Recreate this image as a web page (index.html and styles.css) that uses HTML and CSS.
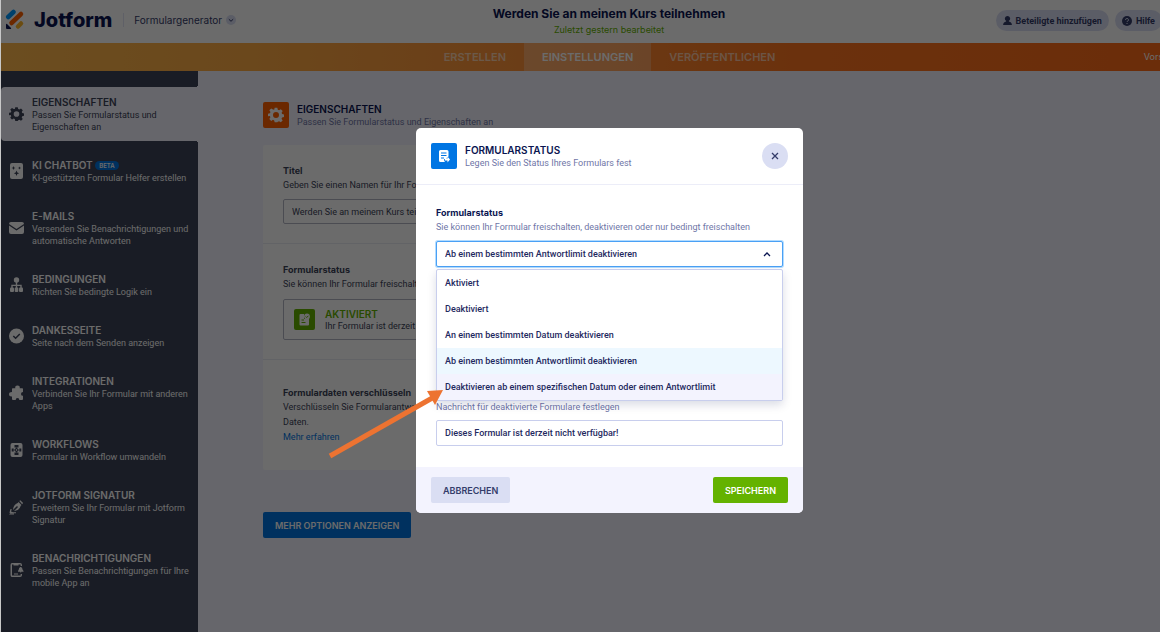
FILE: index.html
```
<!DOCTYPE html>
<html lang="de">
<head>
    <meta charset="UTF-8">
    <meta name="viewport" content="width=device-width, initial-scale=1.0">
    <title>Formulargenerator - Jotform</title>
    <link rel="stylesheet" href="styles.css">
</head>
<body>
    <svg class="sprite" aria-hidden="true">
        <symbol id="gear" viewBox="0 0 24 24">
            <path fill-rule="evenodd" d="M10 1h4l.7 3 1.900.8 2.600-1.600 2.800 2.800-1.600 2.600.8 1.900 2.800.6v3.800l-2.900.7-.8 1.900 1.700 2.600-2.800 2.800-2.600-1.600-1.900.8L14 23h-4l-.7-2.900-1.900-.8-2.600 1.600L2 18.100l1.600-2.600-.8-1.900L0 14V10l2.900-.6.8-1.900L2 4.900l2.800-2.700 2.600 1.600L9.300 4zM12 7.500a4.500 4.500 0 1 0 0 9 4.500 4.500 0 0 0 0-9z"/>
        </symbol>
    </svg>

    <div class="app">
        <header class="topbar">
            <div class="brand">
                <a class="logo" href="#">
                    <svg width="20" height="21" viewBox="0 0 20 21" aria-hidden="true">
                        <g fill="none" stroke-width="4.500" stroke-linecap="round">
                            <path stroke="#0099ff" d="M3.200 8L8.500 3"/>
                            <path stroke="#ff6100" d="M6.500 14L16 5"/>
                            <path stroke="#ffb629" d="M13 17.500l3-3"/>
                        </g>
                        <path fill="#0a1551" d="M1 15.500q0-1 1-.5l4 4q.5 1-.5 1H2q-1 0-1-1z"/>
                    </svg>
                    <span>Jotform</span>
                </a>
                <button class="product" type="button">
                    Formulargenerator
                    <svg width="10" height="10" viewBox="0 0 10 10" aria-hidden="true"><circle cx="5" cy="5" r="5" fill="#dadef3"/><path d="M2.800 4.200L5 6.300l2.200-2.100" fill="none" stroke="#343c6a"/></svg>
                </button>
            </div>
            <div class="form-name">
                <h1>Werden Sie an meinem Kurs teilnehmen</h1>
                <p>Zuletzt gestern bearbeitet</p>
            </div>
            <div class="actions">
                <button class="pill" type="button">
                    <svg width="9" height="10" viewBox="0 0 9 10" aria-hidden="true"><path fill="currentColor" d="M4.500 0a2.600 2.600 0 0 1 1.400 4.800v.7q3 .5 3 3.500H.100q0-3 3-3.500v-.7A2.600 2.600 0 0 1 4.500 0z"/></svg>
                    Beteiligte hinzufügen
                </button>
                <button class="pill" type="button">
                    <svg width="10" height="10" viewBox="0 0 10 10" aria-hidden="true"><circle cx="5" cy="5" r="5" fill="currentColor"/><path d="M3.500 3.900a1.500 1.400 0 1 1 2 1.300q-.5.200-.5.800M5 7v1" fill="none" stroke="#dadef3"/></svg>
                    Hilfe
                </button>
            </div>
        </header>

        <nav class="tabs">
            <div class="tab-list">
                <a href="#">ERSTELLEN</a>
                <a href="#" class="active">EINSTELLUNGEN</a>
                <a href="#">VERÖFFENTLICHEN</a>
            </div>
            <a class="preview" href="#">Vorschau</a>
        </nav>

        <div class="workspace">
            <aside class="sidebar">
                <ul>
                    <li class="active"><a href="#">
                        <svg viewBox="0 0 24 24"><use href="#gear"/></svg>
                        <span><strong>EIGENSCHAFTEN</strong>Passen Sie Formularstatus und<br>Eigenschaften an</span>
                    </a></li>
                    <li><a href="#">
                        <svg viewBox="0 0 15 16"><rect x="1" width="13" height="16" rx="2"/><path class="cut" d="M4.500 3l.6 1.400 1.400.6-1.400.6L4.500 7l-.6-1.400L2.500 5l1.400-.6zM10.500 3.500l.5 1 1 .5-1 .5-.5 1-.5-1-1-.5 1-.5zM7.500 7.500l.8 1.900 1.900.8-1.900.8-.8 1.900-.8-1.900-1.900-.8 1.900-.8z"/></svg>
                        <span><strong>KI CHATBOT <em>BETA</em></strong>KI-gestützten Formular Helfer erstellen</span>
                    </a></li>
                    <li><a href="#">
                        <svg viewBox="0 0 15 16"><path d="M0 4q0-2 2-2h11q2 0 2 2L7.500 9z"/><path d="M0 5.500l7.500 5 7.500-5V12q0 2-2 2H2q-2 0-2-2z"/></svg>
                        <span><strong>E-MAILS</strong>Versenden Sie Benachrichtigungen und<br>automatische Antworten</span>
                    </a></li>
                    <li><a href="#">
                        <svg viewBox="0 0 15 16"><circle cx="7.500" cy="3" r="2.700"/><path d="M6.800 5h1.400v2.700h4.500V11h-1.400V9H3.700v2H2.300V7.700h4.500z"/><rect x="1" y="10.500" width="4" height="4.500" rx="1"/><rect x="5.700" y="10.500" width="3.600" height="4.500" rx="1"/><path d="M6.800 8h1.400v3H6.800z"/><rect x="10" y="10.500" width="4" height="4.500" rx="1"/></svg>
                        <span><strong>BEDINGUNGEN</strong>Richten Sie bedingte Logik ein</span>
                    </a></li>
                    <li><a href="#">
                        <svg viewBox="0 0 15 16"><circle cx="7.500" cy="8" r="7.500"/><path class="line" d="M4.300 8l2.300 2.300 4.200-4.300"/></svg>
                        <span><strong>DANKESSEITE</strong>Seite nach dem Senden anzeigen</span>
                    </a></li>
                    <li><a href="#">
                        <svg viewBox="0 0 15 16"><path d="M3 4q0-.7.700-.7h2.600Q5.700.500 8.500.500t2.200 2.800h2.600q.7 0 .7.700v3q-2 0-2 1.900T14 10.800V14q0 1-1 1h-2.700q.2-2-1.800-2t-1.800 2H4q-1 0-1-1v-2.600q-3 .400-3-2t3-2.400z"/></svg>
                        <span><strong>INTEGRATIONEN</strong>Verbinden Sie Ihr Formular mit anderen<br>Apps</span>
                    </a></li>
                    <li><a href="#">
                        <svg viewBox="0 0 15 16"><rect x="1.500" y="1" width="12" height="14" rx="2"/><path class="cut" d="M5.500 3h4v2.500h-4zM7.500 5.500l2.500 2.500-2.500 2.500L5 8zM2.700 6.500h2v3h-2zM10.300 6.500h2v3h-2zM5.500 10.500h4V13h-4z"/><path d="M7.500 7l1 1-1 1-1-1z"/></svg>
                        <span><strong>WORKFLOWS</strong>Formular in Workflow umwandeln</span>
                    </a></li>
                    <li><a href="#">
                        <svg viewBox="0 0 15 16"><path d="M9.500 3l3 3-.8.800Q11 11 5.500 12L4 10.700Q4.500 5.500 8.700 4zM10.300 2l1-.8 2.800 2.800-1 1.300z"/><path class="line" d="M4 12L8.500 7.500"/><path d="M1.500 10l1.300.3L2 12.500l2 .7h3v1H1l-.5-.7zM1 14.500h4v1H0z"/></svg>
                        <span><strong>JOTFORM SIGNATUR</strong>Erweitern Sie Ihr Formular mit Jotform<br>Signatur</span>
                    </a></li>
                    <li><a href="#">
                        <svg viewBox="0 0 15 16"><path fill-rule="evenodd" d="M3 1h8q2 0 2 2v1h-1.400V2.500H9.500v1h-5v-1H3v11h8.600V12H13v1q0 2-2 2H3q-1.500 0-1.500-2V3Q1.500 1 3 1zM5 11.500h4v1H5z"/><path d="M12 5q1.500.5 1.500 2.500L14.500 9v.7h-2.300v.8h-1v-.8H9V9l.8-1.500Q9.800 5.500 11.300 5z"/></svg>
                        <span><strong>BENACHRICHTIGUNGEN</strong>Passen Sie Benachrichtigungen für Ihre<br>mobile App an</span>
                    </a></li>
                </ul>
            </aside>

            <main class="settings">
                <div class="section-head">
                    <span class="badge orange"><svg width="16" height="16" viewBox="0 0 24 24"><use href="#gear"/></svg></span>
                    <div>
                        <h2>EIGENSCHAFTEN</h2>
                        <p>Passen Sie Formularstatus und Eigenschaften an</p>
                    </div>
                </div>

                <div class="card">
                    <section>
                        <label for="formTitle">Titel</label>
                        <p>Geben Sie einen Namen für Ihr Formular ein</p>
                        <input id="formTitle" type="text" value="Werden Sie an meinem Kurs teilnehmen">
                    </section>
                    <section>
                        <h3>Formularstatus</h3>
                        <p>Sie können Ihr Formular freischalten oder deaktivieren</p>
                        <button class="status" type="button">
                            <svg width="21" height="21" viewBox="0 0 21 21" aria-hidden="true"><rect width="21" height="21" rx="2" fill="#64b200"/><path fill="#fff" d="M6.500 5H10v5h5v5.500q0 1-1 1H6.500q-1 0-1-1V6q0-1 1-1z"/><circle cx="13" cy="7.500" r="2.900" fill="#fff"/><path d="M11.700 7.500l1 1 1.700-1.700M7.500 11H10M7.500 13.500h4" fill="none" stroke="#64b200"/></svg>
                            <span><strong>AKTIVIERT</strong>Ihr Formular ist derzeit sichtbar</span>
                        </button>
                    </section>
                    <section>
                        <h3>Formulardaten verschlüsseln</h3>
                        <p>Verschlüsseln Sie Formularantworten zum Schutz sensibler<br>Daten.</p>
                        <a href="#">Mehr erfahren</a>
                    </section>
                </div>

                <button class="btn blue" type="button">MEHR OPTIONEN ANZEIGEN</button>
            </main>
        </div>

        <div class="overlay">
            <div class="modal" role="dialog" aria-labelledby="modalTitle">
                <div class="modal-head">
                    <span class="badge"><svg width="14" height="14" viewBox="0 0 14 14"><path fill="#fff" d="M3.500 1H10q1.500 0 1.500 1.500v5L9.500 9v1H7.200v2l1 1H3.500Q2 13 2 11.500v-9Q2 1 3.500 1z"/><path d="M4 4h5.500M4 6.500h5.500M4 9h3" fill="none" stroke="#0075e3"/><path fill="#fff" d="M10.500 7.500l2.500 3-2.500 3v-2H8v-2h2.500z"/></svg></span>
                    <div>
                        <h2 id="modalTitle">FORMULARSTATUS</h2>
                        <p>Legen Sie den Status Ihres Formulars fest</p>
                    </div>
                    <button class="close" type="button" aria-label="Schließen">
                        <svg width="8" height="8" viewBox="0 0 8 8"><path d="M1 1l6 6M7 1L1 7" stroke="currentColor" stroke-width="1.300"/></svg>
                    </button>
                </div>
                <div class="modal-body">
                    <label for="status">Formularstatus</label>
                    <p>Sie können Ihr Formular freischalten, deaktivieren oder nur bedingt freischalten</p>
                    <div class="dropdown">
                        <select id="status">
                            <option>Aktiviert</option>
                            <option>Deaktiviert</option>
                            <option>An einem bestimmten Datum deaktivieren</option>
                            <option selected>Ab einem bestimmten Antwortlimit deaktivieren</option>
                            <option>Deaktivieren ab einem spezifischen Datum oder einem Antwortlimit</option>
                        </select>
                        <svg class="caret" width="8" height="6" viewBox="0 0 8 6" aria-hidden="true"><path d="M1 5l3-3 3 3" fill="none" stroke="currentColor" stroke-width="1.300"/></svg>
                        <ul class="options" role="listbox" aria-label="Formularstatus">
                            <li role="option">Aktiviert</li>
                            <li role="option">Deaktiviert</li>
                            <li role="option">An einem bestimmten Datum deaktivieren</li>
                            <li role="option" class="selected" aria-selected="true">Ab einem bestimmten Antwortlimit deaktivieren</li>
                            <li role="option" class="hover">Deaktivieren ab einem spezifischen Datum oder einem Antwortlimit</li>
                        </ul>
                    </div>
                    <label class="message-label" for="message">Warnmeldung</label>
                    <p>Nachricht für deaktivierte Formulare festlegen</p>
                    <input id="message" type="text" value="Dieses Formular ist derzeit nicht verfügbar!">
                </div>
                <div class="modal-foot">
                    <button class="btn grey" type="button">ABBRECHEN</button>
                    <button class="btn green" type="button">SPEICHERN</button>
                </div>
            </div>
        </div>

        <svg class="pointer" width="116" height="70" viewBox="0 0 116 70" aria-hidden="true">
            <path d="M2 67L106 8" stroke="#ed7331" stroke-width="5"/>
            <path d="M115 1L99 2l8 14z" fill="#ed7331"/>
        </svg>
    </div>
</body>
</html>
```
FILE: styles.css
```
* {
    box-sizing: border-box;
}

body {
    margin: 0;
    overflow: hidden;
    background-color: #c8c8c8;
    font-family: Roboto, "Liberation Sans", sans-serif;
    font-size: 9px;
    color: #0a1551;
}

h1, h2, h3, p, ul {
    margin: 0;
    padding: 0;
    list-style: none;
}

h1, h2, h3, label, strong, .logo, .tabs {
    font-family: Inter, "Liberation Sans", sans-serif;
}

a {
    color: inherit;
    text-decoration: none;
}

button, input, select {
    font: inherit;
    color: inherit;
    margin: 0;
}

button {
    border: none;
    padding: 0;
    cursor: pointer;
}

.sprite {
    display: none;
}

/* the builder is a bit wider than the window */
.app {
    position: relative;
    width: 105vw;
    height: 100vh;
    padding-left: 1px;
    display: flex;
    flex-direction: column;
    overflow: hidden;
}

/* top bar */
.topbar {
    display: grid;
    grid-template-columns: 1fr auto 1fr;
    align-items: center;
    height: 43px;
    flex: none;
    padding: 0 56px 2px 4px;
    background-color: #fff;
}

.brand, .logo, .product, .actions, .pill {
    display: flex;
    align-items: center;
}

.brand {
    padding-bottom: 2px;
}

.logo {
    gap: 9px;
    font-size: 20px;
    line-height: 24px;
    font-weight: 800;
}

.product {
    gap: 4px;
    margin-left: 11px;
    padding-left: 10px;
    height: 14px;
    border-left: 1px solid #e3e5f5;
    background: none;
    font-family: Inter, "Liberation Sans", sans-serif;
    font-size: 10px;
    color: #343c6a;
}

.form-name {
    margin-left: 51px;
    text-align: center;
}

.form-name h1 {
    font-size: 12px;
    line-height: 18px;
    font-weight: 700;
}

.form-name p {
    font-family: Inter, "Liberation Sans", sans-serif;
    line-height: 13px;
    color: #64b200;
}

.actions {
    justify-content: flex-end;
    gap: 6px;
}

.pill {
    gap: 4px;
    height: 21px;
    padding: 0 7px;
    border-radius: 11px;
    background-color: #dadef3;
    font-weight: 700;
    color: #343c6a;
}

/* tabs */
.tabs {
    display: grid;
    grid-template-columns: 1fr auto 1fr;
    height: 28px;
    flex: none;
    background: linear-gradient(to right, #ffb84c, #ffac44 20%, #ff953a 40%, #ff7620 65%, #ff6a18);
    color: #fff;
}

.tab-list {
    grid-column: 2;
    display: flex;
    font-size: 11px;
    line-height: 28px;
    font-weight: 600;
}

.tab-list a {
    padding: 0 18px;
    color: rgba(255, 255, 255, 0.6);
}

.tab-list .active {
    background-color: rgba(255, 255, 255, 0.25);
    color: #fff;
}

.preview {
    justify-self: end;
    padding-right: 34px;
    line-height: 28px;
}

/* sidebar */
.workspace {
    flex: 1;
    display: flex;
    min-height: 0;
    background-color: #f3f3fe;
}

.sidebar {
    width: 197px;
    flex: none;
    padding-top: 16px;
    background-color: #3c4358;
    color: #fff;
}

.sidebar ul {
    display: flex;
    flex-direction: column;
    gap: 9px;
}

.sidebar a {
    display: flex;
    align-items: center;
    gap: 8px;
    padding: 8px 0 8px 8px;
    white-space: nowrap;
    line-height: 12px;
}

.sidebar .active {
    position: relative;
    border-radius: 4px 0 0 4px;
    background-color: #f3f3fe;
    color: #3c4358;
}

/* rounded dark corners above and below the active item */
.sidebar .active::before, .sidebar .active::after {
    content: "";
    position: absolute;
    right: 0;
    width: 3px;
    height: 3px;
}

.sidebar .active::before {
    top: -3px;
    background: radial-gradient(circle at 0 0, #3c4358 3px, #f3f3fe 3px);
}

.sidebar .active::after {
    bottom: -3px;
    background: radial-gradient(circle at 0 100%, #3c4358 3px, #f3f3fe 3px);
}

.sidebar svg {
    width: 15px;
    height: 16px;
    flex: none;
    fill: currentColor;
}

.sidebar .cut {
    fill: #3c4358;
}

.sidebar .line {
    fill: none;
    stroke: #3c4358;
    stroke-width: 1.5;
}

.sidebar strong {
    display: block;
    font-size: 10px;
    line-height: 14px;
    font-weight: 600;
}

.sidebar em {
    padding: 1px 4px;
    border-radius: 6px;
    background-color: #0075e3;
    font-size: 6px;
    line-height: 8px;
    font-style: normal;
    vertical-align: 1px;
}

/* settings */
.settings {
    width: 575px;
    padding: 31px 0 0 65px;
}

.badge {
    display: grid;
    place-items: center;
    width: 26px;
    height: 26px;
    border-radius: 2px;
    background-color: #0075e3;
    fill: #fff;
}

.orange {
    background-color: #ff6100;
}

.section-head, .modal-head {
    display: flex;
    align-items: center;
    gap: 8px;
}

.section-head h2, .modal-head h2 {
    font-size: 10px;
    line-height: 14px;
    font-weight: 600;
}

.section-head p, .modal-head p {
    line-height: 12px;
    color: #6f76a7;
}

.card {
    margin: 17px 0 42px;
    border-radius: 2px;
    background-color: #fff;
    color: #3c4358;
}

.card section {
    padding: 19px 20px;
    border-bottom: 1px solid #eaebf2;
}

.card section:last-child {
    padding-top: 26px;
    padding-bottom: 25px;
    border: none;
}

.card label, .card h3, .modal-body label {
    display: block;
    font-size: 9px;
    line-height: 14px;
    font-weight: 700;
}

.card p, .card a {
    line-height: 15px;
}

.card a {
    color: #0075e3;
}

.card input {
    display: block;
    width: 100%;
    height: 25px;
    margin-top: 6px;
    padding: 0 8px;
    border: 1px solid #b4b6c4;
    border-radius: 2px;
    background: none;
}

.status {
    display: flex;
    align-items: center;
    gap: 10px;
    width: 100%;
    height: 41px;
    margin-top: 7px;
    padding: 0 10px;
    border: 1px solid #b4b6c4;
    border-radius: 2px;
    background: none;
    text-align: left;
}

.status strong {
    display: block;
    font-size: 10px;
    line-height: 13px;
    font-weight: 600;
    color: #64b200;
}

.btn {
    height: 26px;
    padding: 0 12px;
    border-radius: 2px;
    font-family: Inter, "Liberation Sans", sans-serif;
    font-weight: 600;
    color: #fff;
}

.blue {
    background-color: #0075e3;
}

.grey {
    background-color: #dadef3;
    color: #343c6a;
}

.green {
    background-color: #64b200;
}

/* modal */
.overlay {
    position: absolute;
    inset: 0 0 0 1px;
    display: grid;
    place-items: center;
    padding-top: 9px;
    background-color: rgba(0, 0, 0, 0.58);
}

.modal {
    width: 387px;
    border-radius: 5px;
    background-color: #fff;
}

.modal-head {
    height: 57px;
    padding: 0 15px;
    border-bottom: 1px solid #ecedf8;
}

.close {
    display: grid;
    place-items: center;
    width: 26px;
    height: 26px;
    margin-left: auto;
    border-radius: 50%;
    background-color: #dadef3;
    color: #343c6a;
}

.modal-body {
    padding: 21px 20px;
}

.modal-body p {
    line-height: 14px;
    color: #6f76a7;
}

.dropdown {
    position: relative;
    margin-top: 7px;
}

.modal-body select, .modal-body input {
    display: block;
    width: 100%;
    height: 26px;
    padding: 0 8px;
    border: 1px solid #c8ceed;
    border-radius: 2px;
    background-color: #fff;
    font-weight: 500;
    color: #1f2a5f;
}

.modal-body input {
    margin-top: 6px;
}

.modal-body select {
    appearance: none;
    border-color: #4aa0f5;
    box-shadow: 0 0 0 1px #b3dcff;
}

.caret {
    position: absolute;
    top: 10px;
    right: 12px;
}

.options {
    position: absolute;
    top: 28px;
    left: 0;
    right: 0;
    border: 1px solid #c8ceed;
    border-radius: 2px;
    background-color: #fff;
    box-shadow: 0 4px 10px rgba(10, 21, 81, 0.15);
    font-weight: 500;
    color: #1f2a5f;
}

.options li {
    padding: 0 8px;
    line-height: 26px;
}

.options .selected {
    background-color: #edf8ff;
}

.options .hover {
    background-color: #f3f3fe;
}

.modal-body .message-label {
    margin-top: 119px;
}

.modal-foot {
    display: flex;
    justify-content: space-between;
    padding: 10px 15px;
    border-radius: 0 0 5px 5px;
    background-color: #f3f3fe;
}

/* arrow drawn over the dialog */
.pointer {
    position: absolute;
    left: 328px;
    top: 389px;
}
```
